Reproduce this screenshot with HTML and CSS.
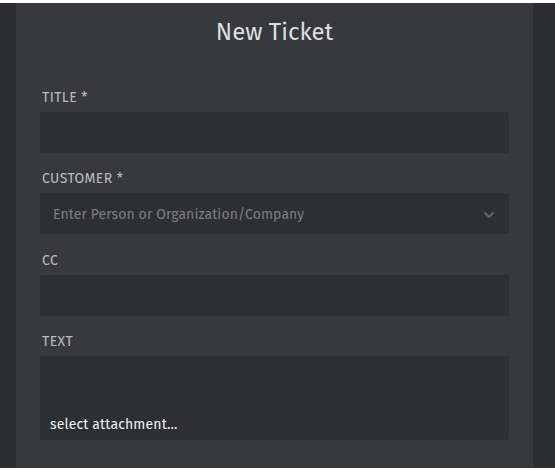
FILE: index.html
```html
<!DOCTYPE html>
<html>
<head>
<meta charset="utf-8">
<link rel="stylesheet" href="styles.css">
</head>
<body>
<div class="app">
  <div class="side-left"></div>
  <main class="panel">
    <h1 class="heading">New Ticket</h1>
    <div class="field">
      <label class="label">TITLE <span class="req">*</span></label>
      <div class="input"></div>
    </div>
    <div class="field">
      <label class="label">CUSTOMER <span class="req">*</span></label>
      <div class="input select">
        <span class="placeholder">Enter Person or Organization/Company</span>
        <svg class="chevron" width="12" height="8" viewBox="0 0 12 8"><path d="M1.5 1.5 L6 6 L10.5 1.5" fill="none" stroke="#66686d" stroke-width="1.8"/></svg>
      </div>
    </div>
    <div class="field">
      <label class="label">CC</label>
      <div class="input"></div>
    </div>
    <div class="field">
      <label class="label">TEXT</label>
      <div class="input textarea">
        <span class="attach">select attachment...</span>
      </div>
    </div>
  </main>
  <div class="side-right"></div>
</div>
</body>
</html>
```
FILE: styles.css
```css
html, body {
  margin: 0;
  padding: 0;
  background: #ffffff;
}
body {
  font-family: "Fira Sans", "Lato", "Noto Sans", sans-serif;
}
.app {
  margin-top: 3px;
  height: 465px;
  display: flex;
  background: #2d2e32;
}
.side-left {
  width: 16px;
  flex: none;
}
.side-right {
  flex: 1;
}
.panel {
  width: 517px;
  flex: none;
  background: #38393e;
  padding: 0 24px;
  box-sizing: border-box;
}
.heading {
  margin: 14px 0 0;
  text-align: center;
  font-size: 24px;
  line-height: 30px;
  font-weight: 400;
  color: #dcdee2;
}
.heading + .field {
  margin-top: 41px;
}
.field + .field {
  margin-top: 16.33px;
}
.label {
  display: block;
  padding: 2px 0 0 2px;
  font-size: 14px;
  line-height: 16px;
  letter-spacing: 0.4px;
  color: #b8bbc2;
  margin-bottom: 6px;
}
.input {
  height: 41px;
  background: #2e2f33;
  border-radius: 3px;
  display: flex;
  align-items: center;
  box-sizing: border-box;
}
.select {
  padding: 2px 14px 0 13px;
  justify-content: space-between;
}
.placeholder {
  font-size: 14px;
  letter-spacing: 0.1px;
  color: #7c7e84;
}
.chevron {
  display: block;
}
.textarea {
  height: 84px;
  align-items: flex-end;
  padding: 0 10px 7px;
}
.attach {
  font-size: 14px;
  letter-spacing: 0.15px;
  color: #f0f1f3;
}
```
